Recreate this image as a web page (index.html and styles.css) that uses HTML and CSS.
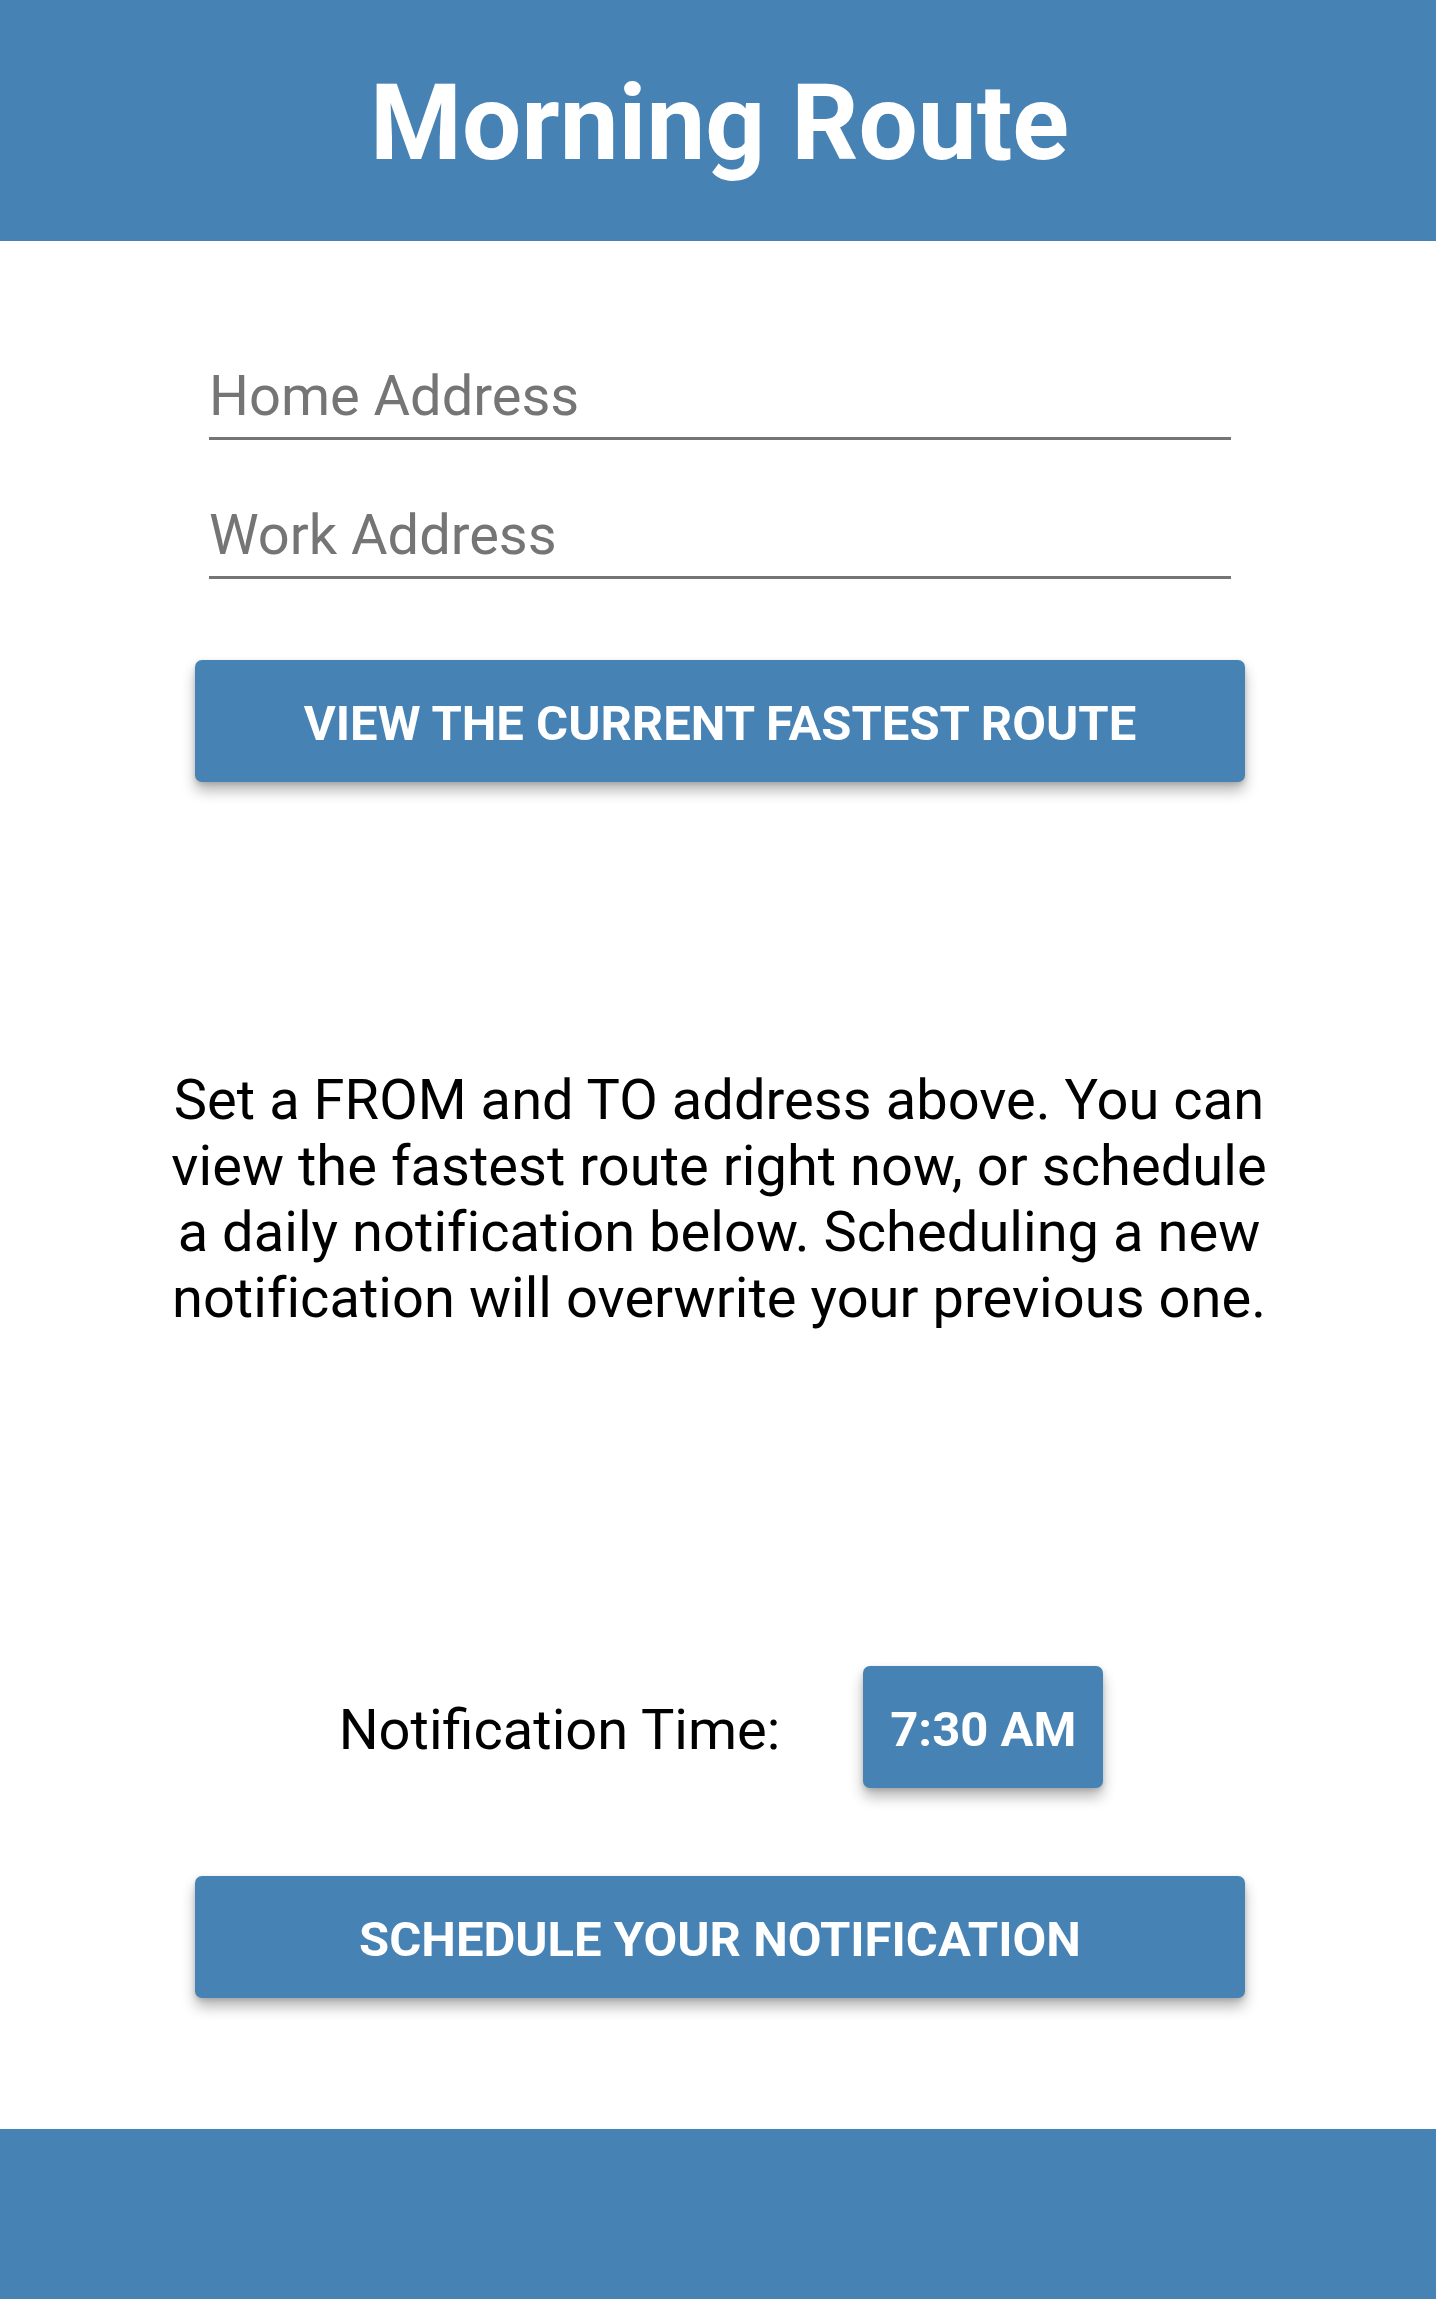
FILE: index.html
```html
<!DOCTYPE html>
<html lang="en">
<head>
<meta charset="utf-8">
<title>Morning Route</title>
<link rel="stylesheet" href="styles.css">
</head>
<body>
<header class="app-bar">
  <h1 class="app-title">Morning Route</h1>
</header>
<main class="content">
  <form class="address-form">
    <input class="address-input" type="text" placeholder="Home Address">
    <input class="address-input address-input--second" type="text" placeholder="Work Address">
  </form>
  <button class="action-btn action-btn--route" type="button">VIEW THE CURRENT FASTEST ROUTE</button>
  <p class="instructions">Set a FROM and TO address above. You can view the fastest route right now, or schedule a daily notification below. Scheduling a new notification will overwrite your previous one.</p>
  <div class="time-row">
    <span class="time-label">Notification Time:</span>
    <button class="time-btn" type="button">7:30 AM</button>
  </div>
  <button class="action-btn action-btn--schedule" type="button">SCHEDULE YOUR NOTIFICATION</button>
</main>
<footer class="bottom-bar"></footer>
</body>
</html>
```

FILE: styles.css
```css
* {
  box-sizing: border-box;
}

html, body {
  margin: 0;
  padding: 0;
  background: #ffffff;
}

body {
  font-family: Roboto, "Noto Sans", "Liberation Sans", sans-serif;
  color: #000000;
  width: 1436px;
  min-height: 2299px;
  display: flex;
  flex-direction: column;
}

.app-bar {
  background: #4682b4;
  height: 241px;
  padding: 62px 0 0 3px;
}

.app-title {
  margin: 0;
  text-align: center;
  color: #ffffff;
  font-size: 105px;
  font-weight: 700;
  line-height: 123px;
}

.content {
  display: flex;
  flex-direction: column;
  align-items: center;
  flex: 1;
}

.address-form {
  width: 1022px;
  margin: 122px 0 0 4px;
  display: flex;
  flex-direction: column;
  gap: 62px;
}

.address-input {
  display: block;
  width: 100%;
  height: 77px;
  padding: 0 0 8px 0;
  border: none;
  border-bottom: 3px solid #757575;
  background: transparent;
  font-family: inherit;
  font-size: 56px;
  line-height: 66px;
  color: #212121;
  outline: none;
  border-radius: 0;
}

.address-input::placeholder {
  color: #757575;
  opacity: 1;
}

.action-btn {
  display: flex;
  align-items: center;
  justify-content: center;
  width: 1050px;
  height: 122px;
  margin-left: 4px;
  padding: 4px 0 0 0;
  border: none;
  border-radius: 7px;
  background: #4682b4;
  color: #ffffff;
  font-family: inherit;
  font-size: 49px;
  font-weight: 700;
  letter-spacing: 0;
  box-shadow: 0 9px 14px rgba(0, 0, 0, 0.28), 0 2px 5px rgba(0, 0, 0, 0.14);
}

.action-btn--route {
  margin-top: 81px;
}

.instructions {
  width: 1120px;
  margin: 285px 0 0 2px;
  text-align: center;
  font-size: 56px;
  line-height: 66px;
  letter-spacing: 0.05px;
  color: #000000;
}

.time-row {
  margin-top: 335px;
  display: flex;
  align-items: center;
  gap: 83px;
  padding-left: 6px;
}

.time-label {
  font-size: 56px;
  line-height: 66px;
  padding-top: 6px;
}

.time-btn {
  display: flex;
  align-items: center;
  justify-content: center;
  width: 240px;
  height: 122px;
  padding: 4px 0 0 0;
  border: none;
  border-radius: 7px;
  background: #4682b4;
  color: #ffffff;
  font-family: inherit;
  font-size: 49px;
  font-weight: 700;
  box-shadow: 0 9px 14px rgba(0, 0, 0, 0.28), 0 2px 5px rgba(0, 0, 0, 0.14);
}

.action-btn--schedule {
  margin-top: 88px;
}

.bottom-bar {
  background: #4682b4;
  height: 170px;
  margin-top: 130px;
}
```
